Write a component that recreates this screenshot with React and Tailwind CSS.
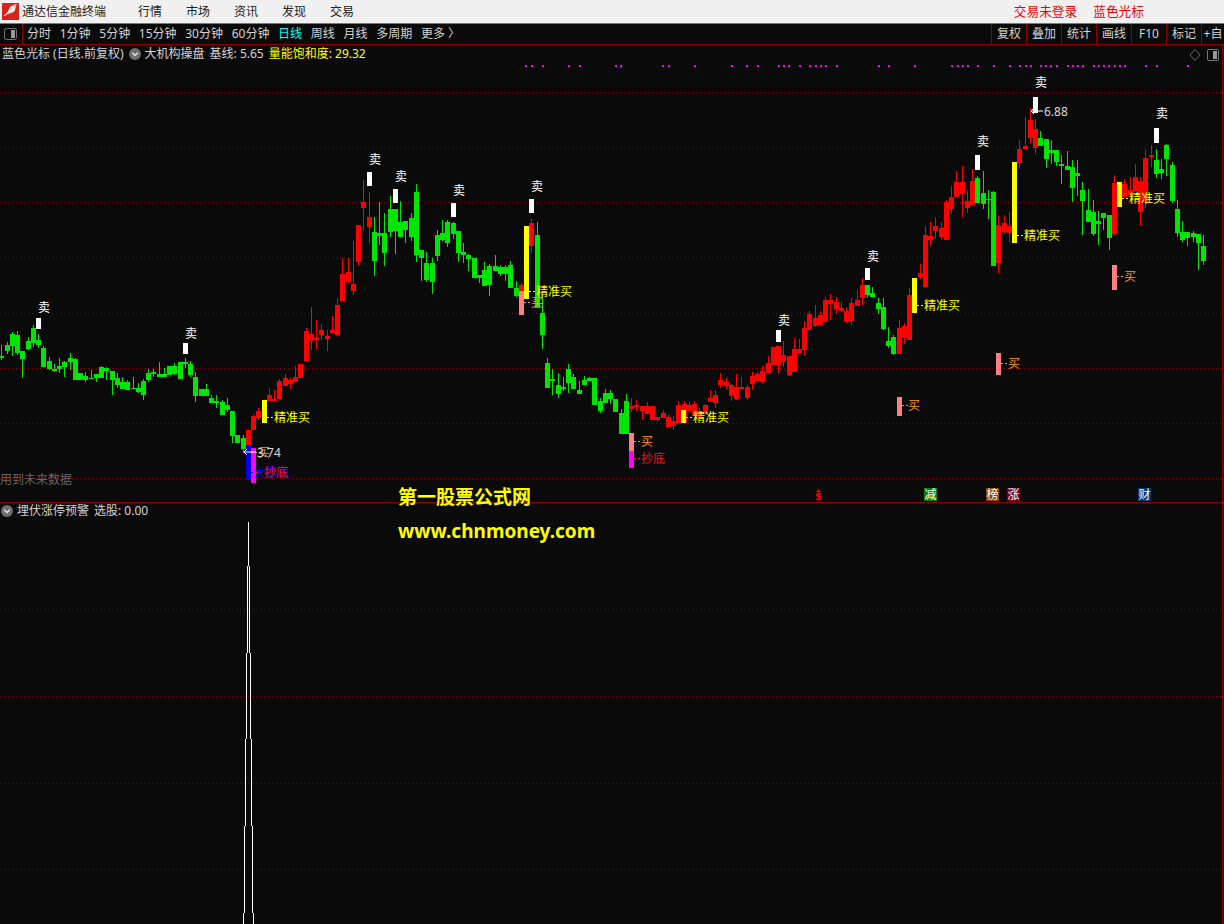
const candles = [
  [345,356,358,360],[342,345,351,354],[332,334,346,356],[331,335,353,355],[351,351,359,378],[337,341,349,350],[325,328,343,347],[334,340,345,348],
  [346,348,367,367],[357,361,369,370],[364,369,371,372],[358,366,369,373],[361,362,367,377],[353,358,362,370],[358,359,380,380],[373,373,380,380],
  [372,376,380,382],[370,378,379,379],[374,374,378,382],[366,367,378,378],[367,368,371,380],[371,371,380,395],[373,378,385,388],[377,382,389,389],
  [380,382,390,390],[377,388,389,389],[383,388,392,393],[379,381,395,400],[369,373,380,382],[369,372,374,377],[362,374,377,377],[368,374,377,377],
  [366,366,375,375],[363,366,374,375],[362,362,379,379],[358,362,364,368],[361,364,375,377],[372,377,396,402],[389,389,396,396],[384,389,396,396],
  [395,398,403,403],[395,401,403,408],[400,402,415,415],[398,405,410,412],[411,411,436,443],[435,435,443,443],[435,438,449,453],
  [430,430,445,445],[414,416,430,430],[408,411,418,420],[400,400,423,423],[388,395,401,401],[390,399,401,401],[379,381,399,399],[374,378,386,386],
  [378,380,384,389],[366,377,382,382],[364,364,378,378],[328,331,361,361],[307,334,341,350],[320,338,340,349],[324,330,335,340],[330,336,339,351],
  [316,330,333,333],[298,305,335,337],[258,274,301,301],[258,272,282,284],[241,284,291,295],[225,225,262,266],[180,202,208,231],[192,217,227,243],
  [217,232,261,276],[202,233,236,245],[213,233,253,266],[196,209,232,237],[209,209,231,254],[201,222,237,237],[221,221,230,243],[213,218,237,241],
  [184,192,255,262],[250,250,258,281],[252,263,280,282],[258,263,282,294],[230,235,256,261],[220,233,240,241],[220,222,243,247],[222,223,234,239],
  [231,231,253,262],[243,252,255,263],[254,255,259,271],[258,258,278,278],[275,275,278,283],[262,270,286,286],[264,266,285,296],[255,266,271,271],
  [265,267,274,276],[265,267,274,281],[261,265,288,288],[281,288,296,297],[283,285,291,291],[226,226,299,299],[219,223,246,253],[222,235,308,308],
  [295,313,335,349],[358,363,388,388],[369,379,381,395],[373,385,394,398],[377,387,389,391],[364,369,383,393],[374,377,389,389],[381,390,394,394],
  [376,380,385,385],[377,378,381,381],[378,378,405,405],[398,401,411,413],[389,393,403,403],[390,393,399,404],[399,399,412,412],[409,413,434,434],
  [394,401,434,434],[398,406,409,412],[400,405,407,411],[406,406,411,420],[402,406,414,414],[406,406,420,420],[417,417,420,422],[410,413,418,418],
  [415,417,427,427],[416,421,426,430],[401,405,423,423],[401,404,423,423],[402,405,411,411],[401,404,416,416],[408,411,417,417],[404,405,414,414],
  [390,398,402,402],[390,395,403,408],[373,380,385,388],[377,382,386,389],[384,385,396,401],[374,387,399,400],[377,387,389,389],[385,387,398,400],
  [372,376,384,390],[372,374,381,381],[366,371,382,384],[356,363,373,373],[347,347,365,365],[346,346,365,373],[341,355,362,367],[356,356,375,376],
  [338,349,372,372],[339,349,353,353],[321,328,350,356],[311,314,330,330],[305,318,326,327],[311,315,325,325],[297,300,322,322],[294,300,304,320],
  [297,302,309,314],[302,308,311,311],[307,311,322,323],[298,303,321,325],[290,300,306,306],[278,285,298,305],[285,285,295,298],[287,293,297,297],
  [298,303,309,314],[298,307,329,330],[327,341,346,348],[335,337,354,355],[320,328,354,354],[323,326,338,344],[288,295,340,340],[278,278,313,313],
  [264,273,277,279],[226,235,287,287],[222,236,240,246],[217,226,231,239],[222,228,237,240],[200,202,240,240],[186,197,209,214],[171,182,197,197],
  [166,182,194,217],[190,201,208,213],[169,181,205,205],[176,178,203,203],[171,193,204,209],[190,199,200,219],[191,192,266,266],[215,225,263,273],
  [215,223,232,234],[212,226,233,242],[162,162,243,243],[140,149,163,169],[117,146,149,149],[108,120,138,143],[119,129,148,154],[131,138,146,146],
  [139,139,159,168],[140,150,153,164],[150,150,162,166],[155,164,166,184],[151,166,170,170],[160,167,188,202],[160,173,176,196],[182,190,201,235],
  [189,210,222,222],[200,212,234,236],[211,221,224,245],[213,213,218,230],[215,215,238,250],[175,183,234,236],[182,182,207,207],[179,184,197,197],
  [177,190,195,195],[164,177,191,191],[177,181,212,226],[149,158,202,208],[145,155,157,167],[149,160,174,178],[159,169,173,179],[144,145,159,176],
  [162,165,201,203],[200,209,233,237],[221,232,240,242],[232,232,238,246],[231,233,237,242],[234,234,243,270],[235,246,261,265],
]

const greenRanges = [[0,46],[71,98],[102,119],[165,170],[186,189],[198,211],[220,229]]
const isGreen = (k) => greenRanges.some(([a, b]) => k >= a && k <= b)
const slotX = (k) => Math.round(5.248 * k - 0.7)

const gridTop = [92,147,202,257,313,368,423,478]
const gridBottom = [609,696,783,869]

const dots = [525,531,542,568,579,615,620,662,668,694,731,746,757,778,783,788,799,809,815,820,825,836,878,888,914,951,957,962,967,977,993,1009,1019,1025,1030,1040,1045,1050,1056,1067,1072,1077,1082,1093,1098,1103,1108,1114,1119,1124,1145,1156,1187]

// white bar, then the 卖 above it
const sells = [
  [36,318,329,44,312],[183,343,354,191,338],[367,172,186,375,164],[393,189,203,401,181],[451,203,217,459,195],[529,199,213,537,191],
  [776,330,342,784,325],[865,268,280,873,261],[975,155,170,983,146],[1033,97,113,1041,87],[1154,128,143,1162,118],
]

const bars = [
  [262,400,423,'#ffff00'],[524,226,299,'#ffff00'],[681,410,423,'#ffff00'],[912,278,313,'#ffff00'],[1012,162,243,'#ffff00'],[1117,182,207,'#ffff00'],
  [519,291,315,'#ff8080'],[629,433,451,'#ff8080'],[897,397,416,'#ff8080'],[996,353,375,'#ff8080'],[1112,265,290,'#ff8080'],
  [246,445,480,'#0000ff'],[251,448,483,'#ff00ff'],[629,451,468,'#ff00ff'],
]

const labels = [
  [267,274,417,'精准买','#ffff00'],[529,536,291,'精准买','#ffff00'],[686,693,417,'精准买','#ffff00'],[917,924,305,'精准买','#ffff00'],[1017,1024,235,'精准买','#ffff00'],[1122,1129,198,'精准买','#ffff00'],
  [524,531,302,'买','#ff9a1f'],[634,641,441,'买','#ff9a1f'],[902,908,405,'买','#ff9a1f'],[1001,1008,363,'买','#ff9a1f'],[1117,1124,276,'买','#ff9a1f'],[251,258,452,'买','#ff9a1f'],
  [251,254,472,'大暴风','#0000ff'],[256,264,472,'抄底','#ff1010'],[634,641,458,'抄底','#ff1010'],
]

const badges = [
  [924,'减','bg-[#008000]'],[986,'榜','bg-[#8b4500]'],[1007,'涨','bg-[#800000]'],[1138,'财','bg-[#003a70]'],
]

// the 选股 line opens out in steps going down
const spike = [[522,566,248,248],[566,653,247,249],[653,739,246,250],[739,826,245,251],[826,913,244,252],[913,924,243,253]]

const leftTabs = ['分时','1分钟','5分钟','15分钟','30分钟','60分钟','日线','周线','月线','多周期','更多 〉']
const rightTabs = [['复权','w-[35px]'],['叠加','w-[35px]'],['统计','w-[35px]'],['画线','w-[35px]'],['F10','w-[35px]'],['标记','w-[35px]'],['+自','w-[23px]']]

const PanelToggle = () => (
  <svg width="13" height="12" viewBox="0 0 13 12">
    <rect x="0.5" y="0.5" width="12" height="11" rx="2" fill="none" stroke="#777" />
    <rect x="7" y="2" width="4" height="8" fill="#999" />
  </svg>
)

const ChevronDot = ({ size = 12 }) => (
  <svg width={size} height={size} viewBox="0 0 12 12" className="shrink-0">
    <circle cx="6" cy="6" r="6" fill="#6e6e6e" />
    <path d="M3.2 4.8 L6 7.6 L8.8 4.8" fill="none" stroke="#e8e8e8" strokeWidth="1.4" />
  </svg>
)

const Logo = () => (
  <svg width="17" height="17" viewBox="0 0 17 17" className="shrink-0">
    <rect width="17" height="17" fill="#d9211e" />
    <path d="M1 13 C4 11 6 9 7 6 C8 3 11 2 15 1 C13 3 14 5 13 7 C12 10 8 10 6 11 C4 12 3 13 1 13 Z" fill="#f4e9e6" />
  </svg>
)

const TopChart = () => (
  <svg width="1224" height="458" viewBox="0 45 1224 458" className="absolute inset-0" shapeRendering="crispEdges">
    {gridTop.map((y) => (
      <line key={y} x1="0" x2="1222" y1={y + 0.5} y2={y + 0.5} stroke="#8b0000" strokeDasharray="1 3" />
    ))}
    <rect x="1222" y="45" width="1" height="458" fill="#8b0000" />
    {dots.map((x) => (
      <rect key={x} x={x} y="65" width="2" height="2" fill="#ff00ff" />
    ))}
    {candles.map(([wickTop, bodyTop, bodyBottom, wickBottom], k) => {
      const color = isGreen(k) ? '#00e600' : '#ff0000'
      const x = slotX(k)
      return (
        <g key={k} fill={color}>
          <rect x={x + 2} y={wickTop} width="1" height={wickBottom - wickTop} />
          <rect x={x} y={bodyTop} width="5" height={bodyBottom - bodyTop} />
        </g>
      )
    })}
    {bars.map(([x, top, bottom, color]) => (
      <rect key={`${x}-${top}`} x={x} y={top} width="5" height={bottom - top} fill={color} />
    ))}
    {sells.map(([x, top, bottom]) => (
      <rect key={x} x={x} y={top} width="5" height={bottom - top} fill="#ffffff" />
    ))}
    {labels.map(([from, to, y, text, color]) => (
      <line key={`${from}-${y}-${text}`} x1={from} x2={to} y1={y + 0.5} y2={y + 0.5} stroke={color} strokeDasharray="2 2" />
    ))}
    <g shapeRendering="auto">
      {sells.map(([x, , , tx, ty]) => (
        <text key={x} x={tx} y={ty} textAnchor="middle" fill="#ffffff" className="text-[12px]">卖</text>
      ))}
      {labels.map(([from, to, y, text, color]) => (
        <text key={`${from}-${y}-${text}`} x={to} y={y + 5} fill={color} className="text-[12px]">{text}</text>
      ))}
      <path d="M256 452 H244 M247 449 L244 452 L247 455" fill="none" stroke="#ffffff" />
      <text x="257" y="457" fill="#d8d8d8" className="text-[12px]">3.74</text>
      <path d="M1043 111 H1031 M1034 108 L1031 111 L1034 114" fill="none" stroke="#ffffff" />
      <text x="1044" y="116" fill="#d8d8d8" className="text-[12px]">6.88</text>
      <path d="M818.5 489 L821 492 H816 Z" fill="#ff0000" />
      <text x="818.5" y="500" textAnchor="middle" fill="#ff0000" className="text-[11px] font-bold">$</text>
    </g>
    <path d="M1195 49.5 L1200 55 L1195 60.5 L1190 55 Z" fill="none" stroke="#666" shapeRendering="auto" />
    <g transform="translate(1207 49)">
      <rect x="0.5" y="0.5" width="11" height="11" rx="2" fill="none" stroke="#777" />
      <rect x="6" y="2" width="4" height="8" fill="#999" />
    </g>
  </svg>
)

const BottomChart = () => (
  <svg width="1224" height="421" viewBox="0 503 1224 421" className="absolute inset-0" shapeRendering="crispEdges">
    {gridBottom.map((y) => (
      <line key={y} x1="0" x2="1222" y1={y + 0.5} y2={y + 0.5} stroke="#8b0000" strokeDasharray="1 3" />
    ))}
    <rect x="1222" y="503" width="1" height="421" fill="#8b0000" />
    {spike.map(([top, bottom, left, right]) => (
      <g key={top} fill="#ffffff">
        <rect x={left} y={top} width="1" height={bottom - top} />
        <rect x={right} y={top} width="1" height={bottom - top} />
      </g>
    ))}
  </svg>
)

export default function App() {
  return (
    <div className="relative w-[1224px] h-[924px] overflow-hidden bg-[#0a0a0a] text-[12px] text-[#d4d4d4] [font-family:'Noto_Sans','Noto_Sans_CJK_SC',sans-serif]">
      {/* title bar */}
      <div className="flex h-[24px] items-center border-b border-[#7a7a7a] bg-[#f0f0f0] pl-[2px] pr-[80px] text-[12px] leading-none text-[#222]">
        <Logo />
        <span className="ml-[3px] w-[116px]">通达信金融终端</span>
        <div className="flex gap-[24px]">
          {['行情','市场','资讯','发现','交易'].map((m) => <span key={m}>{m}</span>)}
        </div>
        <div className="ml-auto flex gap-[16px] text-[12.7px] text-[#f00000]">
          <span>交易未登录</span>
          <span>蓝色光标</span>
        </div>
      </div>

      {/* period tabs */}
      <div className="flex h-[21px] items-center border-b border-[#8b0000] leading-none">
        <div className="flex h-full w-[23px] items-center border-r border-[#8b0000] pl-[4px]">
          <PanelToggle />
        </div>
        <div className="ml-[4px] flex gap-[8.7px]">
          {leftTabs.map((t) => (
            <span key={t} className={t === '日线' ? 'text-[#00ffff]' : ''}>{t}</span>
          ))}
        </div>
        <div className="ml-auto flex h-full">
          {rightTabs.map(([t, w]) => (
            <span key={t} className={`flex h-full items-center justify-center border-l border-[#8b0000] ${w}`}>{t}</span>
          ))}
        </div>
      </div>

      {/* main chart */}
      <div className="relative h-[458px] border-b border-[#8b0000]">
        <TopChart />
        <div className="relative flex h-[18px] items-center pl-[2px] leading-none">
          <span>蓝色光标 (日线.前复权)</span>
          <span className="ml-[5px]"><ChevronDot /></span>
          <span className="ml-[4px]">大机构操盘</span>
          <span className="ml-[5px]">基线: 5.65</span>
          <span className="ml-[5px] text-[#ffff00]">量能饱和度: 29.32</span>
        </div>
        <span className="absolute left-0 top-[429px] leading-none text-[#666666]">用到未来数据</span>
        {badges.map(([x, t, bg]) => (
          <span
            key={t}
            className={`absolute top-[443px] flex h-[13px] w-[13px] items-center justify-center leading-none text-white ${bg}`}
            style={{ left: x }}
          >
            {t}
          </span>
        ))}
      </div>

      {/* lower indicator */}
      <div className="relative h-[421px]">
        <BottomChart />
        <div className="relative flex h-[15px] items-center pl-[1px] pt-[1px] leading-none">
          <ChevronDot />
          <span className="ml-[4px]">埋伏涨停预警</span>
          <span className="ml-[5px]">选股: 0.00</span>
        </div>
      </div>

      {/* watermark */}
      <div className="absolute left-[398px] top-[486px] flex flex-col gap-[12px] text-[19px] font-bold leading-[22px] text-[#ffff00]">
        <span>第一股票公式网</span>
        <span>www.chnmoney.com</span>
      </div>
    </div>
  )
}
